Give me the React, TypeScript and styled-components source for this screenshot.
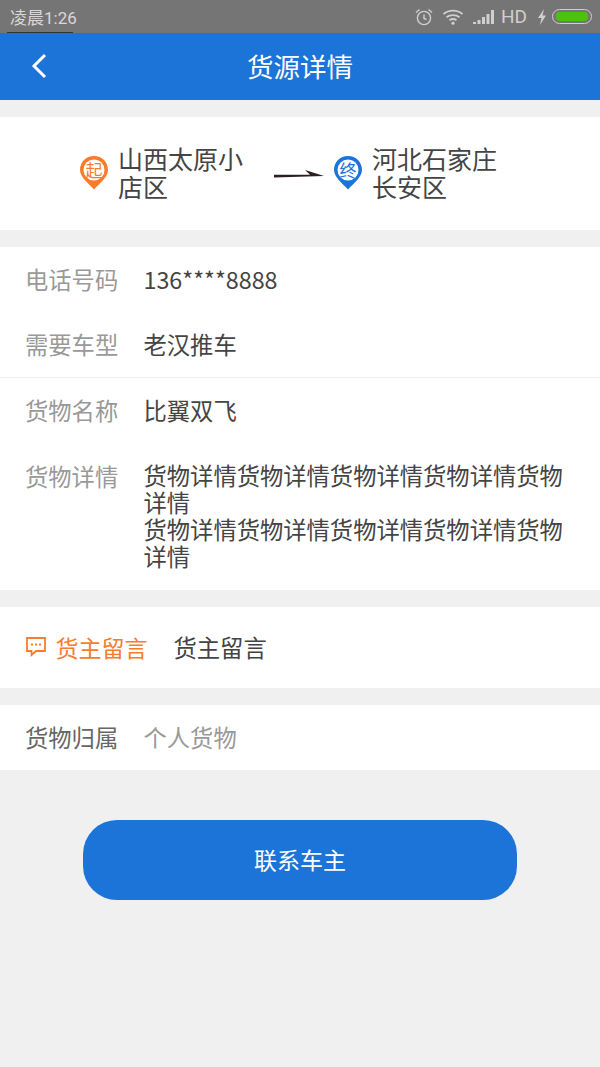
import styled, { createGlobalStyle } from "styled-components";

const GlobalStyle = createGlobalStyle`
  html, body {
    margin: 0;
    padding: 0;
    background: #f0f0f0;
  }
  * {
    box-sizing: border-box;
  }
`;

const fontStack = `"Noto Sans CJK SC", "Noto Sans", sans-serif`;

export default function App() {
  return (
    <Page>
      <GlobalStyle />
      <StatusBar>
        <StatusTime>凌晨1:26</StatusTime>
        <StatusIcons>
          <svg width="20" height="20" viewBox="0 0 20 20" fill="none" stroke="#cfcfcf" strokeWidth="1.4">
            <circle cx="10" cy="11" r="6.6" />
            <path d="M10 7.5V11.5L12.5 12.5M2 5.5L5.5 2.4M18 5.5L14.500 2.4" />
          </svg>
          <svg width="22" height="18" viewBox="0 0 22 18" fill="none" stroke="#cfcfcf" strokeWidth="1.8">
            <path d="M1.500 6C7 1.400 15 1.400 20.500 6M4.500 9.200C8 6.300 14 6.300 17.500 9.200M7.500 12.200C9.500 10.800 12.500 10.800 14.500 12.200" />
            <circle cx="11" cy="15.200" r="1.600" fill="#cfcfcf" stroke="none" />
          </svg>
          <svg width="22" height="16" viewBox="0 0 22 16" fill="#cfcfcf">
            <rect x="1" y="13" width="3" height="2" />
            <rect x="5.500" y="11" width="3" height="4" />
            <rect x="10" y="8" width="3" height="7" />
            <rect x="14.500" y="5" width="3" height="10" />
            <rect x="19" y="1" width="3" height="14" />
          </svg>
          <NetworkLabel>HD</NetworkLabel>
          <svg width="10" height="18" viewBox="0 0 10 18" fill="#cfcfcf">
            <path d="M7 1L1 10H4.500L3 17L9 7.500H5.500Z" />
          </svg>
          <Battery>
            <BatteryFill />
          </Battery>
        </StatusIcons>
      </StatusBar>

      <Header>
        <BackButton>
          <svg width="18" height="28" viewBox="0 0 18 28" fill="none" stroke="#fff" strokeWidth="3">
            <path d="M15 3L4 14L15 25" />
          </svg>
        </BackButton>
        <HeaderTitle>货源详情</HeaderTitle>
      </Header>

      <RouteCard>
        <RouteEnd>
          <Pin color="#f97c2c" label="起" />
          <RouteText>山西太原小<br />店区</RouteText>
        </RouteEnd>
        <RouteArrow>
          <svg width="50" height="8" viewBox="0 0 50 8">
            <path d="M0 4.800H36L31 0L50 6L0 7.400Z" fill="#2a2020" />
          </svg>
        </RouteArrow>
        <RouteEnd>
          <Pin color="#1c74d9" label="终" />
          <RouteText>河北石家庄<br />长安区</RouteText>
        </RouteEnd>
      </RouteCard>

      <Card>
        <PhoneRow>
          <Label>电话号码</Label>
          <Value>136****8888</Value>
        </PhoneRow>
        <TruckRow>
          <Label>需要车型</Label>
          <Value>老汉推车</Value>
        </TruckRow>
        <GoodsRow>
          <Label>货物名称</Label>
          <Value>比翼双飞</Value>
        </GoodsRow>
        <DetailRow>
          <Label>货物详情</Label>
          <DetailValue>
            货物详情货物详情货物详情货物详情货物详情<br />
            货物详情货物详情货物详情货物详情货物详情
          </DetailValue>
        </DetailRow>
      </Card>

      <MessageCard>
        <MessageLabel>
          <svg width="22" height="21" viewBox="0 0 22 21" fill="none" stroke="#f97c2c" strokeWidth="1.800">
            <path d="M2 2H20V15H11L6.500 19V15H2Z" />
            <path d="M6 8.500H8M10 8.500H12M14 8.500H16" />
          </svg>
          <MessageTitle>货主留言</MessageTitle>
        </MessageLabel>
        <Value>货主留言</Value>
      </MessageCard>

      <OwnerCard>
        <OwnerLabel>货物归属</OwnerLabel>
        <OwnerValue>个人货物</OwnerValue>
      </OwnerCard>

      <ContactButton>联系车主</ContactButton>
    </Page>
  );
}

function Pin({ color, label }: { color: string; label: string }) {
  return (
    <PinWrap>
      <svg width="30" height="35" viewBox="0 0 30 35">
        <path d="M15 1C7 1 1 7 1 15C1 22 9 28 15 34.500C21 28 29 22 29 15C29 7 23 1 15 1Z" fill={color} />
        <circle cx="15" cy="15" r="10.500" fill="#fff" />
      </svg>
      <PinLabel $color={color}>{label}</PinLabel>
    </PinWrap>
  );
}

const Page = styled.div`
  width: 600px;
  height: 1067px;
  overflow: hidden;
  background: #f0f0f0;
  font-family: ${fontStack};
  display: flex;
  flex-direction: column;
`;

const StatusBar = styled.div`
  height: 33px;
  background: #757575;
  display: flex;
  align-items: center;
  justify-content: space-between;
  padding: 0 8px 0 10px;
  flex-shrink: 0;
  position: relative;

  &::after {
    content: "";
    position: absolute;
    left: 7px;
    bottom: 0;
    width: 66px;
    height: 1px;
    background: #2f3438;
  }
`;

const StatusTime = styled.span`
  font-family: Roboto, ${fontStack};
  font-size: 17px;
  color: #d8d8d8;
`;

const StatusIcons = styled.div`
  display: flex;
  align-items: center;
  gap: 8px;
`;

const NetworkLabel = styled.span`
  font-family: Roboto, sans-serif;
  font-size: 19px;
  color: #cfcfcf;
  margin-left: -1px;
  margin-right: 2px;
`;

const Battery = styled.div`
  width: 40px;
  height: 15px;
  border: 1px solid #cfcfcf;
  border-radius: 8px;
  padding: 2px 3px;
  margin-left: -3px;
`;

const BatteryFill = styled.div`
  width: 100%;
  height: 100%;
  background: #4cc30a;
  border-radius: 4px;
`;

const Header = styled.div`
  height: 67px;
  background: #1c74d9;
  display: flex;
  align-items: center;
  justify-content: center;
  padding-bottom: 3px;
  position: relative;
  flex-shrink: 0;
`;

const BackButton = styled.div`
  position: absolute;
  left: 30px;
  top: 19px;
  display: flex;
`;

const HeaderTitle = styled.h1`
  margin: 0;
  font-size: 26.500px;
  font-weight: 400;
  color: #fff;
`;

const RouteCard = styled.div`
  height: 113px;
  margin-top: 17px;
  background: #fff;
  display: flex;
  align-items: center;
  padding-left: 79px;
  flex-shrink: 0;
`;

const RouteEnd = styled.div`
  display: flex;
  align-items: center;
  gap: 9px;
`;

const RouteArrow = styled.div`
  display: flex;
  margin: 0 9px 0 31px;
`;

const PinWrap = styled.div`
  position: relative;
  width: 30px;
  height: 35px;
  margin-top: -3px;
`;

const PinLabel = styled.span<{ $color: string }>`
  position: absolute;
  left: 0;
  top: 4px;
  width: 30px;
  text-align: center;
  font-size: 17px;
  line-height: 22px;
  color: ${(p) => p.$color};
`;

const RouteText = styled.div`
  width: 125px;
  padding-bottom: 3px;
  font-size: 25px;
  line-height: 28px;
  color: #444;
`;

const Card = styled.div`
  margin-top: 17px;
  background: #fff;
  height: 343px;
  flex-shrink: 0;
  display: flex;
  flex-direction: column;
`;

const Row = styled.div`
  display: flex;
  padding-left: 25px;
`;

const PhoneRow = styled(Row)`
  height: 66px;
  align-items: center;
  padding-bottom: 3px;
`;

const TruckRow = styled(Row)`
  height: 65px;
  align-items: center;
  padding-bottom: 3px;
  border-bottom: 1px solid #eee;
`;

const GoodsRow = styled(Row)`
  height: 66px;
  align-items: center;
  padding-bottom: 2px;
`;

const DetailRow = styled(Row)`
  flex: 1;
  align-items: flex-start;
  padding-top: 18px;
`;

const Label = styled.span`
  width: 118.500px;
  flex-shrink: 0;
  font-size: 23.300px;
  line-height: 28px;
  color: #999;
`;

const Value = styled.span`
  font-size: 23.300px;
  line-height: 28px;
  color: #444;
`;

const DetailValue = styled(Value)`
  width: 430px;
  line-height: 27px;
`;

const MessageCard = styled(Row)`
  margin-top: 17px;
  height: 81px;
  background: #fff;
  align-items: center;
  padding-bottom: 2px;
  flex-shrink: 0;
`;

const MessageLabel = styled.div`
  display: flex;
  align-items: center;
  gap: 8.500px;
  width: 148.500px;
  flex-shrink: 0;
`;

const MessageTitle = styled.span`
  font-size: 23px;
  color: #f97c2c;
`;

const OwnerCard = styled(Row)`
  margin-top: 17px;
  height: 65px;
  background: #fff;
  align-items: center;
  padding-bottom: 2px;
  flex-shrink: 0;
`;

const OwnerLabel = styled(Label)`
  color: #666;
`;

const OwnerValue = styled(Value)`
  color: #999;
`;

const ContactButton = styled.button`
  display: block;
  width: 434px;
  height: 80px;
  margin: 50px auto 0;
  padding: 0 0 2px;
  border: none;
  border-radius: 34px;
  background: #1c74d9;
  color: #fff;
  font-family: ${fontStack};
  font-size: 23px;
  flex-shrink: 0;
`;
